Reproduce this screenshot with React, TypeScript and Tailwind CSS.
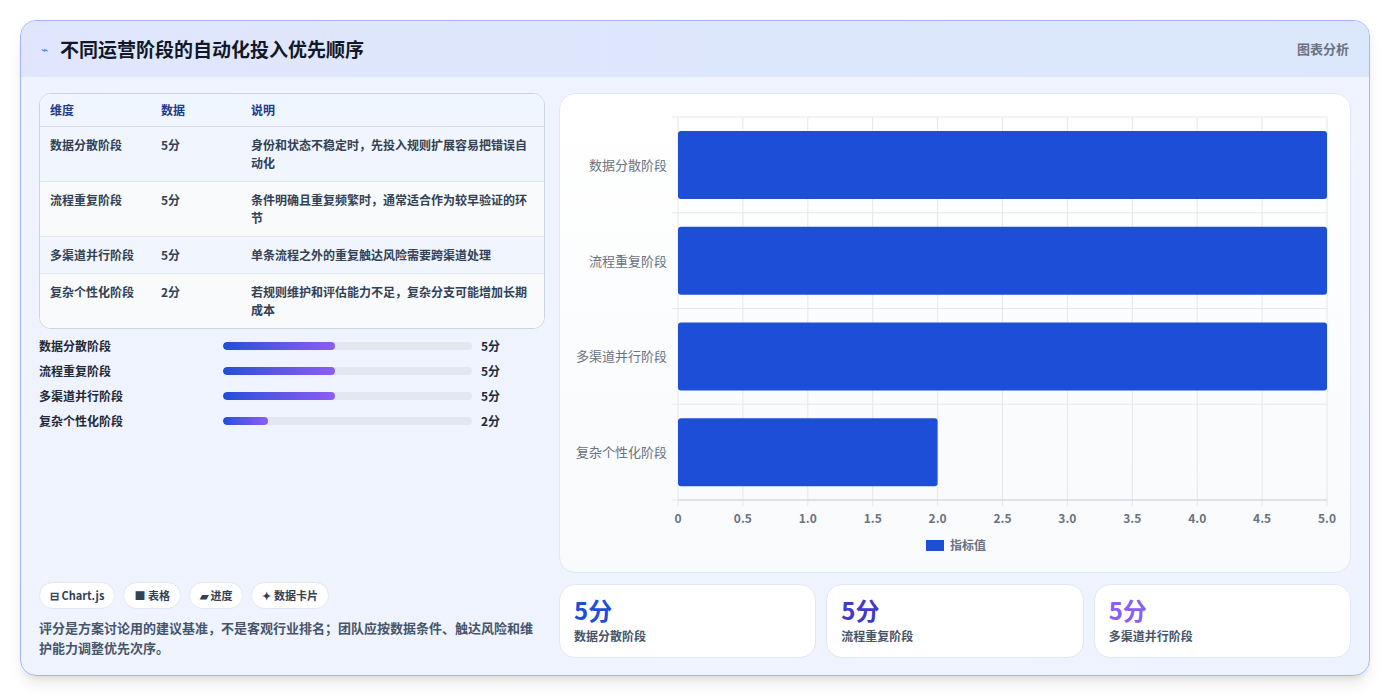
import React from "react";

const rows = [
  { name: "数据分散阶段", v: 5, note: "身份和状态不稳定时，先投入规则扩展容易把错误自动化" },
  { name: "流程重复阶段", v: 5, note: "条件明确且重复频繁时，通常适合作为较早验证的环节" },
  { name: "多渠道并行阶段", v: 5, note: "单条流程之外的重复触达风险需要跨渠道处理" },
  { name: "复杂个性化阶段", v: 2, note: "若规则维护和评估能力不足，复杂分支可能增加长期成本" },
];

const font = { fontFamily: '"Noto Sans CJK SC", "Noto Sans", sans-serif' };

function Chart() {
  const L = 118, R = 767, T = 23, B = 406;
  const band = (B - T) / 4;
  const sx = (R - L) / 5;
  const ticks = [0, 0.5, 1, 1.5, 2, 2.5, 3, 3.5, 4, 4.5, 5];
  return (
    <svg width="790" height="478" style={font}>
      {ticks.map((t) => (
        <line key={t} x1={L + t * sx} x2={L + t * sx} y1={T} y2={B + 6} stroke="#e5e7eb" />
      ))}
      {[0, 1, 2, 3, 4].map((i) => (
        <line key={i} x1={L - 6} x2={R} y1={T + i * band} y2={T + i * band} stroke="#e5e7eb" />
      ))}
      <line x1={L} x2={R} y1={B} y2={B} stroke="#cbd5e1" />
      {rows.map((r, i) => (
        <g key={r.name}>
          <rect x={L} y={T + i * band + 14} width={r.v * sx} height={68} rx={3} fill="#1d4ed8" />
          <text x={L - 11} y={T + i * band + band / 2 + 5} textAnchor="end" fontSize="13" fill="#6b7280">{r.name}</text>
        </g>
      ))}
      {ticks.map((t) => (
        <text key={t} x={L + t * sx} y={429} textAnchor="middle" fontSize="12" fontWeight="700" fill="#6b7280">{t === 0 ? "0" : t.toFixed(1)}</text>
      ))}
      <rect x={366} y={446} width={18} height={11} fill="#1d4ed8" />
      <text x={390} y={456} fontSize="12" fontWeight="700" fill="#6b7280">指标值</text>
    </svg>
  );
}

export default function App() {
  return (
    <div className="w-[1390px] h-[697px] bg-white pt-5 px-5" style={font}>
      <div className="h-[656px] rounded-2xl border border-[#a5b4fc] overflow-hidden bg-gradient-to-br from-[#eff3ff] to-[#eef4ff] shadow-lg flex flex-col">
        <div className="h-[56px] shrink-0 flex items-center justify-between px-5 bg-gradient-to-r from-[#e0e6fd] to-[#dbe8fc]">
          <div className="flex items-center gap-3">
            <span className="text-[#3b82f6] text-xs">⌁</span>
            <span className="text-[19px] font-bold text-[#111827]">不同运营阶段的自动化投入优先顺序</span>
          </div>
          <span className="text-[13px] font-semibold text-[#6b7280]">图表分析</span>
        </div>
        <div className="flex-1 flex gap-[14px] px-[18px] pt-4 pb-[18px]">
          <div className="w-[506px] flex flex-col">
            <div className="rounded-xl border border-[#cbd5e1] bg-[#f8fafc] overflow-hidden text-[12px]">
              <div className="flex bg-[#eff6ff] text-[#1e3a8a] font-bold h-[33px] items-center border-b border-[#d6dce6]">
                <div className="w-[121px] pl-[10px]">维度</div>
                <div className="w-[90px]">数据</div>
                <div>说明</div>
              </div>
              {rows.map((r, i) => (
                <div key={r.name} className={`flex py-[9px] leading-[18px] font-semibold text-[#334155] ${i % 2 ? "bg-[#f8fafc]" : "bg-[#f1f5fe]"} ${i < 3 ? "border-b border-[#e2e8f0]" : ""}`}>
                  <div className="w-[121px] pl-[10px] shrink-0">{r.name}</div>
                  <div className="w-[90px] shrink-0">{r.v}分</div>
                  <div className="pr-4">{r.note}</div>
                </div>
              ))}
            </div>
            <div className="mt-[8px] flex flex-col gap-[7px] pb-2">
              {rows.map((r) => (
                <div key={r.name} className="flex items-center h-[18px] text-[12px] font-semibold text-[#1f2937]">
                  <div className="w-[184px]">{r.name}</div>
                  <div className="w-[249px] h-2 rounded-full bg-[#e2e8f0] overflow-hidden">
                    <div className="h-full rounded-full bg-gradient-to-r from-[#1d4ed8] to-[#8b5cf6]" style={{ width: `${r.v * 9}%` }} />
                  </div>
                  <div className="ml-[9px]">{r.v}分</div>
                </div>
              ))}
            </div>
            <div className="mt-auto flex gap-2 text-[11px] font-bold text-[#334155]">
              <span className="px-[10px] h-[27px] flex items-center rounded-full bg-white border border-[#e2e8f0]">⊟ Chart.js</span>
              <span className="px-[10px] h-[27px] flex items-center rounded-full bg-white border border-[#e2e8f0]">■ 表格</span>
              <span className="px-[10px] h-[27px] flex items-center rounded-full bg-white border border-[#e2e8f0]">▰ 进度</span>
              <span className="px-[10px] h-[27px] flex items-center rounded-full bg-white border border-[#e2e8f0]">✦ 数据卡片</span>
            </div>
            <p className="mt-[9px] text-[13px] leading-[20px] font-semibold text-[#475569]">
              评分是方案讨论用的建议基准，不是客观行业排名；团队应按数据条件、触达风险和维护能力调整优先次序。
            </p>
          </div>
          <div className="flex-1 flex flex-col gap-[11px]">
            <div className="h-[480px] rounded-2xl border border-[#e2e8f0] bg-gradient-to-b from-white to-[#f8fafc] overflow-hidden">
              <Chart />
            </div>
            <div className="flex gap-[10px]">
              {[
                ["数据分散阶段", "text-[#1d4ed8]"],
                ["流程重复阶段", "text-[#4338ca]"],
                ["多渠道并行阶段", "text-[#8b5cf6]"],
              ].map(([n, c]) => (
                <div key={n} className="flex-1 h-[74px] rounded-2xl bg-white border border-[#e2e8f0] px-[14px] pt-[10px]">
                  <div className={`text-[24px] font-bold leading-[30px] ${c}`}>5分</div>
                  <div className="text-[12px] font-semibold text-[#475569] mt-[2px]">{n}</div>
                </div>
              ))}
            </div>
          </div>
        </div>
      </div>
    </div>
  );
}
